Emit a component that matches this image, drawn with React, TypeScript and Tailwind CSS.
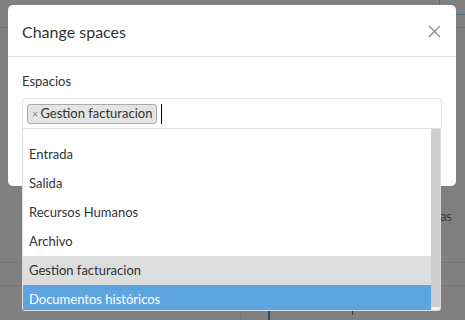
import React from 'react';

const options = ['Entrada', 'Salida', 'Recursos Humanos', 'Archivo', 'Gestion facturacion', 'Documentos históricos'];

export default function App() {
  return (
    <div className="relative w-[465px] h-[320px] overflow-hidden bg-[#808080] font-['Lato',sans-serif]">
      {/* dimmed page behind the modal */}
      <div className="flex flex-col h-full">
        <div className="h-[28px] shrink-0 border-b border-[#767676] flex justify-end">
          <div className="w-[26px] h-[15px] border-l border-b border-[#4f6f86]" />
        </div>
        <div className="flex-1 flex justify-end items-end pr-[13px] pb-[36px]">
          <span className="text-[13px] text-[#3c3c3c]">as</span>
        </div>
        <div className="h-[23px] shrink-0 border-t border-[#767676]" />
        <div className="h-[35px] shrink-0 border-t border-[#767676] flex items-end">
          <div className="ml-[240px] w-px h-[10px] bg-[#767676]" />
          <div className="ml-[27px] w-[2px] h-[9px] bg-[#2a4d6c]" />
          <div className="ml-[82px] mb-[5px] w-px h-[4px] bg-[#333]" />
        </div>
      </div>

      {/* modal */}
      <div className="absolute left-[8px] top-[5px] w-[448px] h-[181px] bg-white rounded-[5px]">
        <div className="flex items-center justify-between h-[52px] px-[14px] border-b border-[#e0e0e0]">
          <h4 className="text-[16px] text-[#333] mt-[2px]">Change spaces</h4>
          <svg width="13" height="13" viewBox="0 0 13 13" className="mr-[1px] mt-[1px]">
            <path d="M1 1 L12 12 M12 1 L1 12" stroke="#8a8a8a" strokeWidth="1.3" fill="none" />
          </svg>
        </div>
        <div className="px-[14px] pt-[16px]">
          <label className="block text-[13px] text-[#333] leading-[16px]">Espacios</label>
          <div className="relative mt-[9px]">
            <div className="flex items-center h-[31px] border border-[#e3e3e3] border-b-0 rounded-t-[3px] pl-[4px]">
              <span className="flex items-center h-[20px] px-[4px] bg-[#e4e4e4] border border-[#aaa] rounded-[3px] text-[13px] text-[#333]">
                <span className="text-[11px] text-[#888] mr-[2px]">×</span>Gestion facturacion
              </span>
              <span className="ml-[4px] w-px h-[20px] bg-black" />
            </div>
            <div className="absolute left-0 top-[30px] w-[419px] h-[183px] bg-white border border-[#d8dfe4] rounded-b-[3px] flex">
              <ul className="flex-1 pt-[11px] overflow-hidden">
                {options.map((o, i) => (
                  <li
                    key={o}
                    className={
                      'h-[29px] flex items-center px-[6px] text-[13px] ' +
                      (i === 4 ? 'bg-[#dddddd] text-[#333]' : i === 5 ? 'bg-[#5da5e0] text-white' : 'text-[#333]')
                    }
                  >
                    {o}
                  </li>
                ))}
              </ul>
              <div className="w-[9px] flex flex-col">
                <div className="flex-1 bg-[#cdcdcd]" />
                <div className="h-[3px] bg-[#f0f0f0]" />
              </div>
            </div>
          </div>
        </div>
      </div>
    </div>
  );
}
